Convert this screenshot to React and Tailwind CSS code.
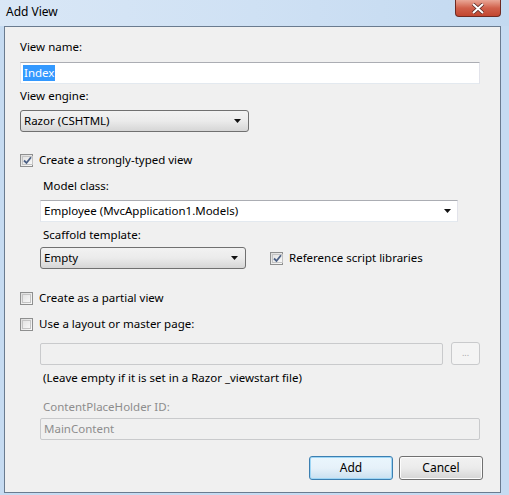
import React from 'react';

const font = { fontFamily: '"Noto Sans", "Open Sans", sans-serif' };

const Check = ({ checked }) => (
    <span className="w-[13px] h-[13px] shrink-0 border border-[#8e8f8f] bg-gradient-to-br from-[#dcdcdc] to-[#fbfbfb] p-px flex">
        <span className="flex-1 border border-[#c4c4c4] bg-gradient-to-br from-[#e4e4e4] to-[#f7f7f7] flex items-center justify-center">
            {checked && (
                <svg width="9" height="9" viewBox="0 0 9 9">
                    <path d="M1 4.5 L3.5 7 L8 1.2" fill="none" stroke="#4d6185" strokeWidth="1.8" />
                </svg>
            )}
        </span>
    </span>
);

const Arrow = () => (
    <svg width="8" height="5" viewBox="0 0 8 5"><path d="M0 0 H7 L3.5 4 Z" fill="#111" /></svg>
);

const DropButton = ({ value, width }) => (
    <div className={`${width} h-[22px] rounded-[3px] border border-[#707070] bg-gradient-to-b from-[#f2f2f2] via-[#ebebeb] to-[#d6d6d6] flex items-center justify-between pl-[3px] pr-[6px] text-black`}>
        <span>{value}</span>
        <Arrow />
    </div>
);

const App = () => {
    return (
        <div style={font} className="w-[509px] h-[495px] bg-[#c6dbf1] flex flex-col overflow-hidden">
            {/* Title bar */}
            <div className="h-[26px] shrink-0 flex justify-between bg-gradient-to-r from-[#d9e7f6] via-[#cfe1f4] to-[#c3d9f0]">
                <span className="pl-[6px] pt-[4px] text-[12px] text-black leading-[16px]">Add View</span>
                <div className="w-[46px] h-[17px] mr-[8px] rounded-b-[4px] border border-t-0 border-[#6e2a22] bg-gradient-to-b from-[#e9a797] via-[#d0604b] to-[#c2452f] flex items-center justify-center">
                    <svg width="14" height="11" viewBox="0 0 14 11">
                        <path d="M2 1 L12 10 M12 1 L2 10" stroke="#5a2a24" strokeWidth="3.6" />
                        <path d="M2 1 L12 10 M12 1 L2 10" stroke="#fff" strokeWidth="2" />
                    </svg>
                </div>
            </div>

            {/* Client area */}
            <div className="flex-1 ml-[4px] mr-[8px] mb-[2px] border border-[#6a7b8f] bg-[#f0f0f0] flex flex-col pl-[15px] pr-[20px] pt-[12px] text-[11.5px] leading-[16px] text-black">
                <span>View name:</span>
                <div className="mt-[7px] h-[22px] border border-[#abadb3] border-b-[#e3e9ef] border-x-[#e2e3ea] bg-white flex items-center pl-[2px]">
                    <span className="bg-[#3399ff] text-white px-px">Index</span>
                </div>
                <span className="mt-[4px]">View engine:</span>
                <div className="mt-[6px]">
                    <DropButton value="Razor (CSHTML)" width="w-[229px]" />
                </div>

                <label className="mt-[20px] flex items-center gap-[6px]">
                    <Check checked />
                    <span>Create a strongly-typed view</span>
                </label>

                <div className="pl-[20px] flex flex-col">
                    <span className="mt-[10px] pl-[3px]">Model class:</span>
                    <div className="mt-[6px] w-[418px] h-[22px] border border-[#abadb3] border-b-[#e3e9ef] border-x-[#e2e3ea] bg-white flex items-center justify-between pl-[3px] pr-[5px]">
                        <span>Employee (MvcApplication1.Models)</span>
                        <Arrow />
                    </div>
                    <span className="mt-[5px] pl-[3px]">Scaffold template:</span>
                    <div className="mt-[4px] flex items-center">
                        <DropButton value="Empty" width="w-[206px]" />
                        <label className="ml-[24px] flex items-center gap-[6px]">
                            <Check checked />
                            <span>Reference script libraries</span>
                        </label>
                    </div>
                </div>

                <label className="mt-[21px] flex items-center gap-[6px]">
                    <Check />
                    <span>Create as a partial view</span>
                </label>
                <label className="mt-[10px] flex items-center gap-[6px]">
                    <Check />
                    <span>Use a layout or master page:</span>
                </label>

                <div className="pl-[20px] flex flex-col">
                    <div className="mt-[10px] flex items-center">
                        <div className="w-[403px] h-[22px] rounded-[2px] border border-[#c9cacc] bg-[#f0f0f0]" />
                        <div className="ml-[8px] w-[29px] h-[23px] rounded-[3px] border border-[#c9cacc] bg-[#f4f4f4] flex items-center justify-center text-[9px] text-[#aaa] leading-none pb-[3px]">...</div>
                    </div>
                    <span className="mt-[5px] pl-[3px]">(Leave empty if it is set in a Razor _viewstart file)</span>
                    <span className="mt-[13px] pl-[3px] text-[#8d8d8d]">ContentPlaceHolder ID:</span>
                    <div className="mt-[3px] w-[440px] h-[22px] rounded-[2px] border border-[#c9cacc] bg-[#f0f0f0] flex items-center pl-[3px] text-[#8d8d8d]">MainContent</div>
                </div>

                <div className="mt-[16px] flex justify-end gap-[6px] mr-[-3px]">
                    <button className="w-[84px] h-[24px] rounded-[3px] border border-[#3c7fb1] bg-gradient-to-b from-[#eaf6fd] via-[#e6f1f9] to-[#c9e0f0] text-[12px] shadow-[inset_0_0_0_1px_#9ed6f5]">Add</button>
                    <button className="w-[84px] h-[24px] rounded-[3px] border border-[#707070] bg-gradient-to-b from-[#f2f2f2] via-[#ebebeb] to-[#d5d5d5] text-[12px] shadow-[inset_0_0_0_1px_#fcfcfc]">Cancel</button>
                </div>
            </div>
        </div>
    );
};

export default App;
